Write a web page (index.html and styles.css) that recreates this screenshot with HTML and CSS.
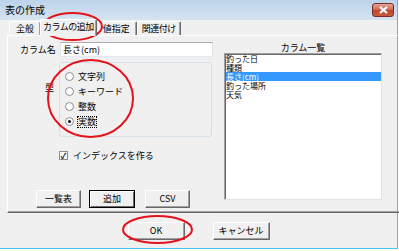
FILE: index.html
```html
<!DOCTYPE html>
<html lang="ja">
<head>
  <meta charset="UTF-8">
  <title>表の作成</title>
  <link rel="stylesheet" href="styles.css">
</head>
<body>

  <div class="window">
    <div class="titlebar">
      <span class="title">表の作成</span>
      <span class="close">
        <svg width="11" height="8" viewBox="0 0 11 8"><path d="M2 1 L9 7 M9 1 L2 7" stroke="#fff" stroke-width="2.2"/></svg>
      </span>
    </div>

    <div class="tabs">
      <span class="tab">全般</span>
      <span class="tab active">カラムの追加</span>
      <span class="tab">値指定</span>
      <span class="tab">関連付け</span>
    </div>

    <div class="panel">
      <div class="col-left">
        <div class="name-row">
          <span class="label">カラム名</span>
          <div class="textbox">長さ(cm)</div>
        </div>

        <div class="type-row">
          <span class="type-label">型</span>
          <div class="group">
            <div class="radio"><span class="dot"></span>文字列</div>
            <div class="radio"><span class="dot"></span>キーワード</div>
            <div class="radio"><span class="dot"></span>整数</div>
            <div class="radio checked"><span class="dot"></span><span class="focus">実数</span></div>
          </div>
        </div>

        <div class="check"><span class="box">✓</span>インデックスを作る</div>

        <div class="btn-row">
          <span class="btn">一覧表</span>
          <span class="btn default">追加</span>
          <span class="btn">CSV</span>
        </div>
      </div>

      <div class="col-right">
        <div class="list-title">カラム一覧</div>
        <ul class="list">
          <li>釣った日</li>
          <li>種類</li>
          <li class="selected">長さ(cm)</li>
          <li>釣った場所</li>
          <li>天気</li>
        </ul>
      </div>
    </div>

    <div class="footer">
      <span class="btn wide">OK</span>
      <span class="btn wide">キャンセル</span>
    </div>

    <!-- red marks drawn over the dialog -->
    <svg class="marks" width="398" height="249" viewBox="0 0 398 249">
      <ellipse cx="72.5" cy="26.5" rx="29.5" ry="13.5"/>
      <ellipse cx="90.5" cy="98.5" rx="42.5" ry="38.5"/>
      <ellipse cx="157.5" cy="229.5" rx="34.5" ry="13.5"/>
    </svg>
  </div>

</body>
</html>
```

FILE: styles.css
```css
body {
  margin: 0;
  background: #fff;
  font-family: "Noto Sans CJK JP", "Liberation Sans", sans-serif;
  font-size: 9px;
  color: #000;
}

.window {
  position: relative;
  width: 397px;
  height: 248px;
  border-right: 1px solid #3ec3ee;
  border-bottom: 1px solid #3ec3ee;
  background: #f0f0f0;
  display: flex;
  flex-direction: column;
}

.titlebar {
  height: 20px;
  flex: none;
  background: linear-gradient(180deg, #bcd3ea 0%, #d6e3f1 100%);
  display: flex;
  align-items: center;
  justify-content: space-between;
  padding: 0 3px 0 5px;
}

.title {
  font-size: 10px;
  line-height: 12px;
}

.close {
  width: 20px;
  height: 12px;
  border: 1px solid #7a2d22;
  border-radius: 3px;
  background: linear-gradient(180deg, #e7a597 0%, #d26a57 45%, #c0462f 55%, #c95a40 100%);
  display: flex;
  align-items: center;
  justify-content: center;
}

/* tab strip */
.tabs {
  height: 15px;
  flex: none;
  display: flex;
  align-items: flex-end;
  padding-left: 9px;
}

.tab {
  height: 13px;
  line-height: 13px;
  padding: 0 6px;
  border-top: 1px solid #fff;
  border-left: 1px solid #fff;
  border-right: 1px solid #696969;
  box-shadow: inset -1px 0 #a0a0a0;
  border-radius: 2px 2px 0 0;
}

.tab:last-child {
  padding: 0 4px;
  letter-spacing: -0.5px;
}

.tab.active {
  height: 16px;
  margin: 0 -1px -1px -1px;
  padding: 0 2px;
  letter-spacing: -0.5px;
  background: #f0f0f0;
  position: relative;
  z-index: 1;
}

/* tab page */
.panel {
  height: 176px;
  width: 382px;
  margin-left: 7px;
  flex: none;
  border-top: 1px solid #fff;
  border-left: 1px solid #fff;
  border-right: 1px solid #696969;
  border-bottom: 1px solid #696969;
  box-shadow: inset -1px -1px #a0a0a0;
  display: flex;
  padding-left: 12px;
}

.col-left {
  width: 193px;
  padding-top: 6px;
  display: flex;
  flex-direction: column;
}

.name-row {
  display: flex;
  align-items: center;
  height: 15px;
}

.label {
  width: 40px;
}

.textbox {
  width: 149px;
  height: 13px;
  line-height: 13px;
  padding-left: 2px;
  background: #fff;
  border: 1px solid;
  border-color: #abadb3 #dbdfe6 #e3e9ef #e2e3ea;
}

.type-row {
  display: flex;
  margin-top: 5px;
  margin-left: 25px;
}

.type-label {
  width: 14px;
  padding-top: 20px;
  line-height: 11px;
}

.group {
  width: 151px;
  height: 67px;
  border: 1px solid #d5dfe5;
  border-radius: 3px;
  padding-top: 6px;
}

.radio {
  height: 15px;
  display: flex;
  align-items: center;
  padding-left: 5px;
}

.dot {
  width: 7px;
  height: 7px;
  border: 1px solid #8d8d8d;
  border-radius: 50%;
  background: #fff;
  margin-right: 4px;
  display: flex;
  align-items: center;
  justify-content: center;
}

.radio.checked .dot::after {
  content: "";
  width: 3px;
  height: 3px;
  border-radius: 50%;
  background: #000;
}

.focus {
  outline: 1px dotted #000;
  line-height: 10px;
}

.check {
  display: flex;
  align-items: center;
  height: 11px;
  margin-top: 13px;
  margin-left: 39px;
}

.box {
  width: 7px;
  height: 7px;
  border: 1px solid #8d8d8d;
  background: #fff;
  font-size: 8px;
  line-height: 7px;
  text-align: center;
  font-weight: bold;
  margin-right: 5px;
}

.btn-row {
  display: flex;
  gap: 8px;
  margin-top: 29px;
  margin-left: 16px;
}

.btn {
  width: 43px;
  height: 16px;
  line-height: 16px;
  text-align: center;
  background: #f0f0f0;
  border: 1px solid;
  border-color: #fff #696969 #696969 #fff;
  box-shadow: inset -1px -1px #a0a0a0;
}

.btn-row .btn:last-child {
  margin-left: 2px;
}

.btn.default {
  border-color: #000;
  box-shadow: inset 1px 1px #fff, inset -1px -1px #696969;
  width: 44px;
}

.col-right {
  width: 158px;
  margin-left: 11px;
  padding-top: 6px;
}

.list-title {
  height: 11px;
  line-height: 11px;
  text-align: center;
}

.list {
  list-style: none;
  margin: 0;
  padding: 0 0 0 1px;
  height: 145px;
  background: #fff;
  border: 1px solid;
  border-color: #a0a0a0 #e3e3e3 #e3e3e3 #a0a0a0;
  box-shadow: inset 1px 1px #696969;
  font-size: 8px;
}

.list li {
  height: 9px;
  line-height: 9px;
}

.list li.selected {
  background: #3399ff;
  color: #fff;
}

.footer {
  display: flex;
  justify-content: center;
  gap: 28px;
  padding-top: 9px;
}

.btn.wide {
  width: 55px;
}

.marks {
  position: absolute;
  left: 0;
  top: 0;
  pointer-events: none;
}

.marks ellipse {
  fill: none;
  stroke: #e3121b;
  stroke-width: 2;
}
```
